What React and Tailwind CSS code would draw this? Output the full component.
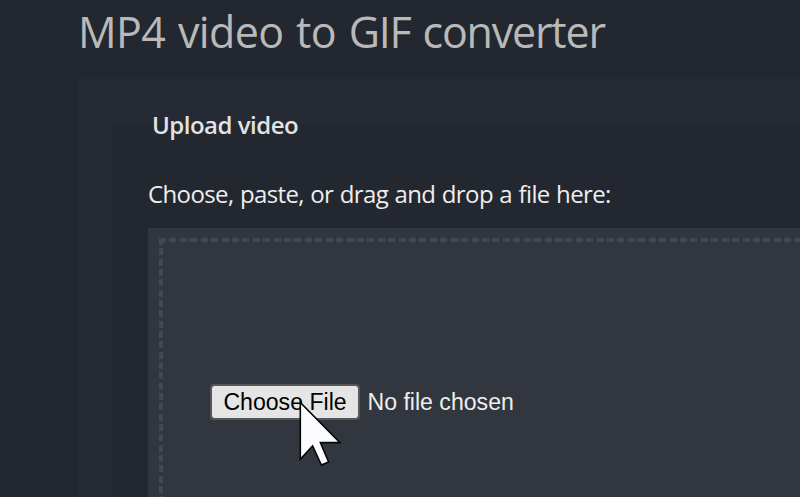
function Cursor() {
  return (
    <svg className="pointer-events-none absolute left-[297px] top-[397px] h-[72px] w-[50px]" viewBox="297 397 50 72">
      <path
        d="M300.3 402.5V459.3L312.6 446L321.4 465L328.6 462L320.4 442.6H340Z"
        fill="#fcfcfe"
        stroke="#050608"
        strokeWidth="1.6"
      />
    </svg>
  );
}

function DropZone() {
  return (
    <div className="h-[300px] bg-[#32363e] pl-[10.5px] pt-[10px]">
      <div className="h-full bg-[repeating-linear-gradient(90deg,#434750_0_7px,transparent_7px_10.42px)] bg-[length:100%_4px] bg-no-repeat">
        <div className="h-full bg-[repeating-linear-gradient(180deg,#434750_0_7px,transparent_7px_10.34px)] bg-[length:4px_100%] bg-no-repeat pl-[51.5px] pt-[146px]">
          <div className="flex items-center font-['Liberation_Sans',Arial,sans-serif] text-[23.1px] leading-[34px]">
            <button className="h-[36px] w-[150px] whitespace-nowrap rounded-[4px] border-2 border-[#55575b] bg-[#e5e5e5] bg-clip-padding text-center leading-[32px] text-black">
              Choose File
            </button>
            <span className="ml-[7.5px] whitespace-nowrap text-[#eeeeee]">No file chosen</span>
          </div>
        </div>
      </div>
    </div>
  );
}

export default function App() {
  return (
    <main className="relative h-[497px] w-full overflow-hidden bg-[#23272f] pl-[78px] font-['Open_Sans','Noto_Sans',sans-serif]">
      <h1 className="h-[78px] whitespace-nowrap pt-[2px] text-[43px] font-normal leading-[60px] tracking-[-0.6px] text-[#b9b9b9] [word-spacing:2px]">
        MP4 video to <span className="tracking-[-1.2px]">GIF converter</span>
      </h1>
      <section className="h-[500px] rounded-tl-[4px] bg-[#262a35] pl-[35px] pt-[46px]">
        <fieldset className="h-[500px] rounded-tl-[3px] bg-[#23272f] pl-[35px]">
          <div className="-mt-[16px] h-[65px] whitespace-nowrap pl-[4px] text-[24px] font-semibold leading-[34px] tracking-[-0.5px] text-[#e2e2e4]">
            <span>Upload video</span>
          </div>
          <div className="h-[55px] whitespace-nowrap text-[24px] leading-[41px] tracking-[-0.62px] text-[#eeeeee] [word-spacing:0.8px]">
            <span>Choose, paste, or drag and drop a file here:</span>
          </div>
          <DropZone />
        </fieldset>
      </section>
      <Cursor />
    </main>
  );
}
